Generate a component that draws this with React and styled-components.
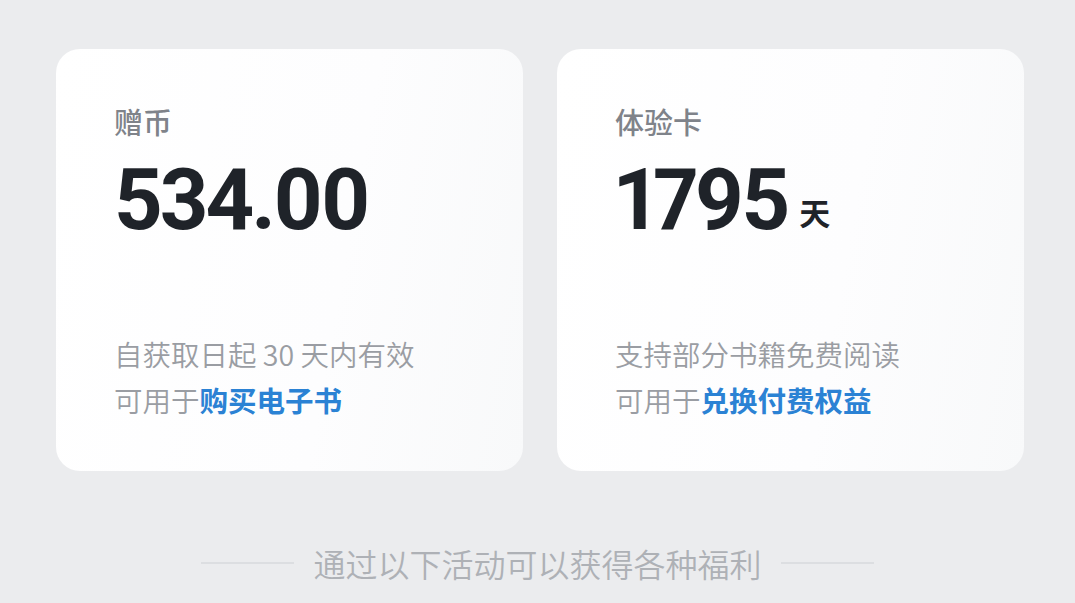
import React from 'react';
import styled, { createGlobalStyle } from 'styled-components';

const GlobalStyle = createGlobalStyle`
  html, body {
    margin: 0;
    padding: 0;
    background: #ebecee;
  }
  body {
    font-family: "Noto Sans CJK SC", "Noto Sans", sans-serif;
  }
`;

const Page = styled.div`
  width: 1075px;
  height: 603px;
  overflow: hidden;
  box-sizing: border-box;
  padding: 49px 51px 0 56px;
  background: #ebecee;
`;

const Cards = styled.div`
  display: grid;
  grid-template-columns: 467px 467px;
  column-gap: 34px;
`;

const Card = styled.div`
  height: 422px;
  box-sizing: border-box;
  padding: 50px 0 0 58px;
  border-radius: 24px;
  background: linear-gradient(100deg, #ffffff 0%, #fdfdfe 60%, #f8f9fa 100%);
  display: flex;
  flex-direction: column;
`;

const Title = styled.div`
  font-size: 29px;
  line-height: 44px;
  font-weight: 500;
  color: #7f838a;
`;

const Amount = styled.div`
  display: flex;
  align-items: baseline;
  margin-top: 7px;
  height: 100px;
`;

const Number = styled.span`
  font-family: Roboto, "Liberation Sans", sans-serif;
  font-size: 85px;
  font-weight: 700;
  font-variant-numeric: proportional-nums;
  letter-spacing: -3px;
  color: #1f2329;
  line-height: 100px;
`;

const Unit = styled.span`
  margin-left: 12px;
  font-size: 31px;
  font-weight: 700;
  color: #1f2329;
  position: relative;
  top: -4px;
`;

const Desc = styled.div`
  margin-top: auto;
  margin-bottom: 48px;
  font-size: 28.5px;
  line-height: 46px;
  font-weight: 350;
  color: #9a9da3;
`;

const Link = styled.span`
  color: #2b82d4;
  font-weight: 700;
`;

const Divider = styled.div`
  display: flex;
  align-items: center;
  justify-content: center;
  margin-top: 72px;
  margin-left: -56px;
  margin-right: -51px;
  gap: 19px;
`;

const Rule = styled.div`
  width: 93px;
  height: 2px;
  background: #dcdee1;
`;

const DividerText = styled.span`
  font-size: 32px;
  line-height: 40px;
  font-weight: 350;
  color: #aeb1b6;
`;

const cards = [
  {
    title: '赠币',
    value: '534.00',
    unit: null,
    line1: '自获取日起 30 天内有效',
    link: '购买电子书'
  },
  {
    title: '体验卡',
    value: '1795',
    unit: '天',
    line1: '支持部分书籍免费阅读',
    link: '兑换付费权益'
  }
];

const App = () => {
  return (
    <Page>
      <GlobalStyle />
      <Cards>
        {cards.map((c) => (
          <Card key={c.title}>
            <Title>{c.title}</Title>
            <Amount>
              <Number>{c.value}</Number>
              {c.unit && <Unit>{c.unit}</Unit>}
            </Amount>
            <Desc>
              <div>{c.line1}</div>
              <div>
                可用于<Link>{c.link}</Link>
              </div>
            </Desc>
          </Card>
        ))}
      </Cards>
      <Divider>
        <Rule />
        <DividerText>通过以下活动可以获得各种福利</DividerText>
        <Rule />
      </Divider>
    </Page>
  );
};

export default App;
